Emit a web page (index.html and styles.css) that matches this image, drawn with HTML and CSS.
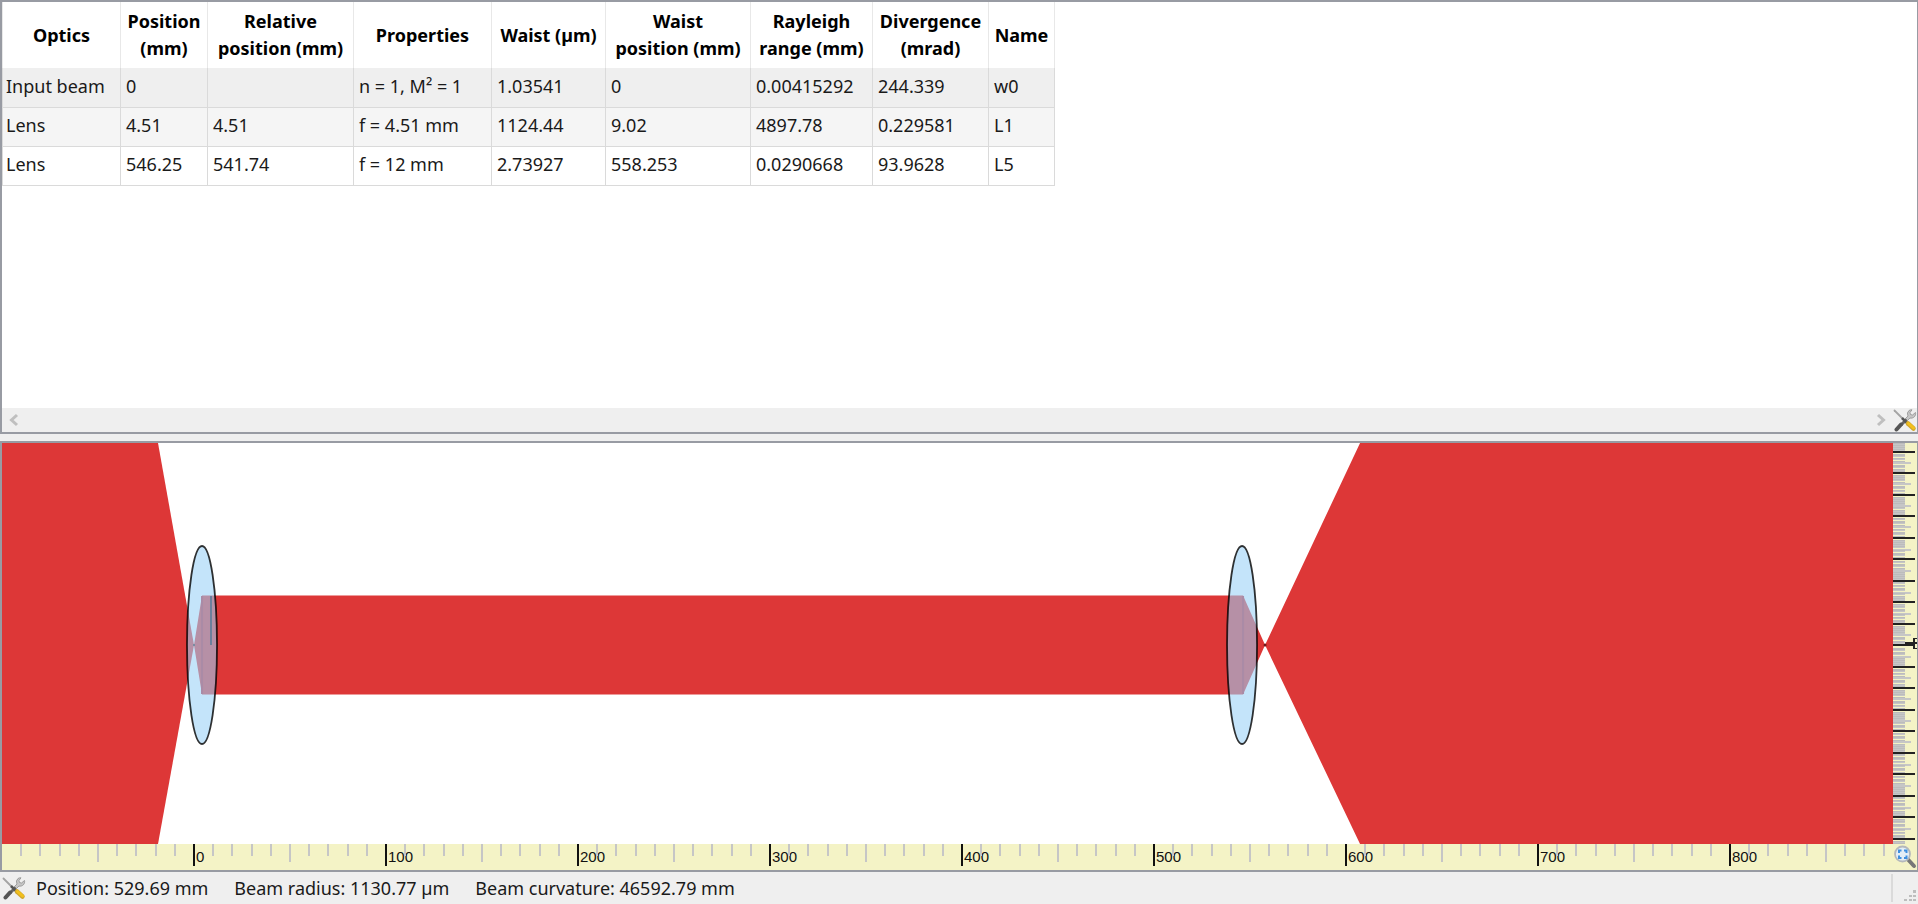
FILE: index.html
```html
<!DOCTYPE html>
<html lang="en">
<head>
<meta charset="utf-8">
<title>Gaussian beam</title>
<link rel="stylesheet" href="styles.css">
</head>
<body>
<svg class="defs" aria-hidden="true">
  <symbol id="tools" viewBox="0 0 24 24">
    <path d="M1.500 2.500 L9.500 10.500" stroke="#a4a4a4" stroke-width="1.800" stroke-linecap="round"/>
    <path d="M16 2.500 A4.500 4.500 0 0 0 15 8 L12.500 10.500 L14.500 12.500 L17 10 A4.500 4.500 0 0 0 22.500 4.500 L19.500 7 L17.500 6.500 L17 4.500 L19 1.800 A4.500 4.500 0 0 0 16 2.500 Z" fill="#c6c6c6" stroke="#8f8f8f" stroke-width="0.800"/>
    <path d="M13.500 11.500 L8 17" stroke="#666" stroke-width="3"/>
    <path d="M8 16.500 L3.500 21.500" stroke="#555" stroke-width="4" stroke-linecap="round"/>
    <path d="M9 10 L15 16" stroke="#555" stroke-width="2.500"/>
    <path d="M15 15.500 L20.500 20.500" stroke="#d0a52c" stroke-width="4.500" stroke-linecap="round"/>
    <path d="M15.500 15.500 L20.500 20" stroke="#f2c01c" stroke-width="3" stroke-linecap="round"/>
  </symbol>
</svg>
<main class="window">
  <section class="panel optics">
    <div class="sheet">
      <table class="grid">
        <colgroup><col class="c-optics"><col class="c-pos"><col class="c-rel"><col class="c-prop"><col class="c-waist"><col class="c-wpos"><col class="c-ray"><col class="c-div"><col class="c-name"></colgroup>
        <thead>
          <tr><th>Optics</th><th>Position<br>(mm)</th><th>Relative<br>position (mm)</th><th>Properties</th><th>Waist (µm)</th><th>Waist<br>position (mm)</th><th>Rayleigh<br>range (mm)</th><th>Divergence<br>(mrad)</th><th>Name</th></tr>
        </thead>
        <tbody>
          <tr class="input"><td>Input beam</td><td>0</td><td></td><td>n = 1, M² = 1</td><td>1.03541</td><td>0</td><td>0.00415292</td><td>244.339</td><td>w0</td></tr>
          <tr class="alt"><td>Lens</td><td>4.51</td><td>4.51</td><td>f = 4.51 mm</td><td>1124.44</td><td>9.02</td><td>4897.78</td><td>0.229581</td><td>L1</td></tr>
          <tr><td>Lens</td><td>546.25</td><td>541.74</td><td>f = 12 mm</td><td>2.73927</td><td>558.253</td><td>0.0290668</td><td>93.9628</td><td>L5</td></tr>
        </tbody>
      </table>
    </div>
    <div class="scroll">
      <button class="arrow" aria-label="Scroll left"><svg width="12" height="14" viewBox="0 0 12 14"><path d="M9 2 L3.500 7 L9 12" fill="none" stroke="#bfbfbf" stroke-width="3"/></svg></button>
      <button class="arrow" aria-label="Scroll right"><svg width="12" height="14" viewBox="0 0 12 14"><path d="M3 2 L8.500 7 L3 12" fill="none" stroke="#bfbfbf" stroke-width="3"/></svg></button>
      <button class="tool" aria-label="Table settings"><svg width="24" height="24"><use href="#tools"/></svg></button>
    </div>
  </section>

  <section class="panel plot">
    <svg class="beam" viewBox="0 0 1891 401" preserveAspectRatio="xMinYMid slice" role="img" aria-label="Beam path">
      <g fill="#dd3737">
        <path d="M0 0 H156 L192 202 L156 401 H0 Z"/>
        <path d="M192 202 L200 152.500 H1241 L1263 202 L1358 0 H1891 V401 H1358 L1263 202 L1241 251.500 H200 Z"/>
      </g>
      <path d="M200 153 V251 M1241 153 V251" stroke="#c02c38" stroke-width="2"/>
      <circle cx="192" cy="202" r="1" fill="#222"/>
      <circle cx="1263" cy="202" r="1.500" fill="#701818"/>
      <g fill="#9ad0f6" fill-opacity="0.580" stroke="#000" stroke-opacity="0.800" stroke-width="1.800">
        <ellipse cx="200" cy="202" rx="15" ry="99"/>
        <ellipse cx="1240" cy="202" rx="15" ry="99"/>
      </g>
      <path d="M209 153 V202" stroke="#6b7f9c" stroke-width="2"/>
    </svg>
    <svg class="ruler-v" id="rulerV"></svg>
    <svg class="ruler-h" id="rulerH"></svg>
    <button class="fit" aria-label="Fit view">
      <svg width="24" height="26" viewBox="0 0 24 26">
        <path d="M15 15.500 L21 22" stroke="#777" stroke-width="4" stroke-linecap="round"/>
        <circle cx="9.500" cy="10" r="7.500" fill="#e4eef6" stroke="#b4b8bc" stroke-width="1.800"/>
        <path d="M6 9 V6.500 H8.500 M11 6.500 H13.500 V9 M13.500 11.500 V14 H11 M8.500 14 H6 V11.500" fill="none" stroke="#3f8fe0" stroke-width="2"/>
      </svg>
    </button>
  </section>

  <footer class="status">
    <button class="tool" aria-label="Settings"><svg width="24" height="24"><use href="#tools"/></svg></button>
    <span>Position: 529.69 mm</span>
    <span>Beam radius: 1130.77 µm</span>
    <span>Beam curvature: 46592.79 mm</span>
    <div class="grip">
      <svg width="12" height="12" viewBox="0 0 12 12" fill="#bdbdbd"><path d="M9 0h3v3h-3z M5 5h3v2h-3z M9 5h3v2h-3z M0 9h3v2h-3z M5 9h3v2h-3z M9 9h3v2h-3z"/></svg>
    </div>
  </footer>
</main>
<script src="rulers.js"></script>
</body>
</html>
```
FILE: styles.css
```css
* { box-sizing: border-box; }
body {
  margin: 0;
  background: #efefef;
  color: #1a1a1a;
  font: 18px/27px "Noto Sans", "Open Sans", sans-serif;
}
.defs { position: absolute; width: 0; height: 0; }
button {
  border: 0;
  padding: 0;
  background: none;
  display: flex;
  align-items: center;
  justify-content: center;
}
.window {
  display: flex;
  flex-direction: column;
  min-height: 100vh;
}
.panel { border: 2px solid #989ba3; border-right-width: 1px; }

.optics {
  display: flex;
  flex-direction: column;
  flex: 434 0 0;
  margin-bottom: 7px;
  background: #fff;
}
.sheet { flex: 1; }
.grid { border-collapse: collapse; table-layout: fixed; width: 1052px; }
.c-optics { width: 118px; }
.c-pos { width: 87px; }
.c-rel { width: 146px; }
.c-prop { width: 138px; }
.c-waist { width: 114px; }
.c-wpos { width: 145px; }
.c-ray { width: 122px; }
.c-div { width: 116px; }
.c-name { width: 66px; }
th, td { border: 1px solid #dadada; white-space: nowrap; }
th {
  height: 66px;
  padding: 0;
  border-top: 0;
  border-bottom: 0;
  border-left-color: #e8e8e8;
  border-right-color: #e8e8e8;
  color: #000;
  font-weight: 700;
}
td { height: 39px; padding: 0 5px 2px; }
td:first-child { padding-left: 3px; }
.input td { background: #efefef; border-top: 0; }
.alt td { background: #f5f5f5; }

.scroll { display: flex; height: 24px; background: #efefef; }
.arrow { width: 24px; }
.arrow + .arrow { margin-left: auto; }
.tool { width: 24px; height: 24px; }

.plot {
  display: grid;
  grid-template-columns: minmax(0, 1fr) 24px;
  grid-template-rows: minmax(0, 1fr) 26px;
  flex: 431 0 0;
  background: #f4f3c6;
}
.beam { width: 100%; height: 100%; background: #fff; }
.ruler-v, .ruler-h { width: 100%; height: 100%; overflow: hidden; }
.ruler-h text { font: 15px "Liberation Sans", sans-serif; fill: #111; }

.status {
  display: flex;
  align-items: center;
  gap: 26px;
  height: 32px;
  padding: 0 2px;
}
.status .tool { margin-right: -16px; }
.grip {
  display: flex;
  align-items: flex-end;
  justify-content: flex-end;
  width: 25px;
  height: 28px;
  margin-left: auto;
  border-left: 2px solid #dadada;
}
```
FILE: rulers.js
```js
const NS = "http://www.w3.org/2000/svg";

function bar(svg, x, y, width, height, fill) {
  const r = document.createElementNS(NS, "rect");
  Object.entries({ x, y, width, height, fill }).forEach(([k, v]) => r.setAttribute(k, v));
  svg.appendChild(r);
}

function label(svg, x, y, text) {
  const t = document.createElementNS(NS, "text");
  t.setAttribute("x", x);
  t.setAttribute("y", y);
  t.textContent = text;
  svg.appendChild(t);
}

// Horizontal scale: 192px per 100 mm, a tick every 10 mm
const h = document.getElementById("rulerH");
for (let k = -9; 192 + k * 19.2 < h.clientWidth; k++) {
  const x = Math.round(192 + k * 19.2);
  if (k % 10 === 0) {
    bar(h, x - 1, 0, 2, 22, "#111");
    label(h, x + 2, 18, String(k * 10));
  } else {
    bar(h, x - 1, 0, 2, k % 5 === 0 ? 18 : 12, "#c6c6c6");
  }
}

// Vertical scale: ten fine ticks per labelled step, centred on the axis
const v = document.getElementById("rulerV");
for (let k = -94; k <= 92; k++) {
  const y = Math.round(Math.round(k * 1.61) * 1.335 + 202);
  if (k % 10 !== 0) {
    const mid = k % 5 === 0;
    bar(v, 0, y, 12, 1, "#bcbcbc");
    if (mid) bar(v, 0, y, 18, 2, "#c6c6c6");
    else bar(v, 0, y + 1, 12, 1, "#c6c6c6");
  }
}
for (let k = -9; k <= 9; k++) {
  bar(v, 0, Math.round(k * 21.5 + 201), 22, 2, "#222");
}
bar(v, 12, 199, 12, 2, "#222");
bar(v, 20, 195, 2, 11, "#222");
bar(v, 20, 195, 4, 1, "#222");
bar(v, 20, 205, 4, 1, "#222");
```
